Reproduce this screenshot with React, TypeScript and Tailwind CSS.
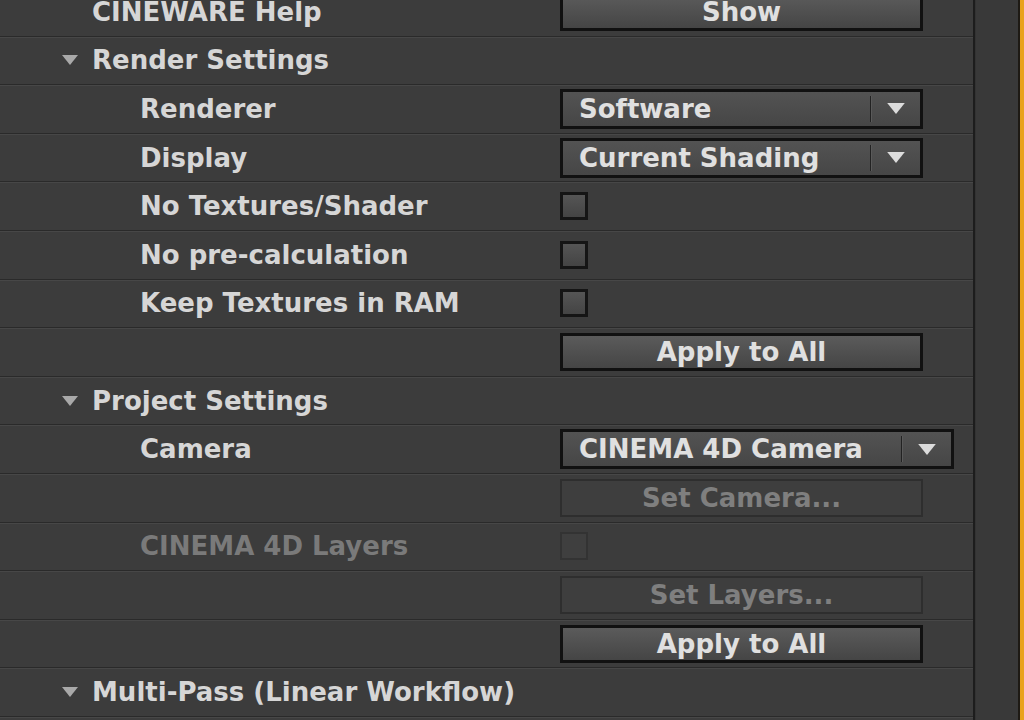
import React from 'react';

const font = "font-['DejaVu_Sans',sans-serif]";

const Tri = ({ className = '' }: { className?: string }) => (
  <svg width="16" height="10" viewBox="0 0 16 10" className={className}>
    <path d="M0 0 H16 L8 10 Z" fill="currentColor" />
  </svg>
);

const Row = ({ children }: { children: React.ReactNode }) => (
  <div className="h-[48.6px] flex items-center border-b border-[#2a2a2a] shadow-[0_1px_0_#474747]">
    {children}
  </div>
);

const Label = ({ text, dim = false }: { text: string; dim?: boolean }) => (
  <div className={`w-[560px] shrink-0 pl-[140px] ${dim ? 'text-[#7a7a7a]' : 'text-[#d6d6d6]'}`}>{text}</div>
);

const Header = ({ text }: { text: string }) => (
  <div className="w-[560px] shrink-0 flex items-center text-[#d6d6d6] whitespace-nowrap">
    <Tri className="ml-[62px] mr-[14px] text-[#a9a9a9]" />
    <span>{text}</span>
  </div>
);

const Button = ({ text, disabled = false }: { text: string; disabled?: boolean }) =>
  disabled ? (
    <div className="w-[363px] h-[38px] flex items-center justify-center border-2 border-[#2e2e2e] bg-[#3e3e3e] text-[#7f7f7f]">
      {text}
    </div>
  ) : (
    <div className="w-[363px] h-[38px] flex items-center justify-center border-[3px] border-[#111] bg-gradient-to-b from-[#5b5b5b] to-[#454545] text-[#e0e0e0]">
      {text}
    </div>
  );

const Select = ({ text, wide = false }: { text: string; wide?: boolean }) => (
  <div
    className={`${wide ? 'w-[394px]' : 'w-[363px]'} h-[40px] flex items-center border-[3px] border-[#111] bg-gradient-to-b from-[#535353] to-[#464646] text-[#e0e0e0]`}
  >
    <span className="flex-1 pl-[16px]">{text}</span>
    <div className="w-[2px] h-[26px] bg-[#222] border-r border-[#5a5a5a]" />
    <div className="w-[48px] flex justify-center">
      <Tri className="text-[#dcdcdc] w-[18px] h-[11px]" />
    </div>
  </div>
);

const Check = ({ disabled = false }: { disabled?: boolean }) => (
  <div
    className={`w-[28px] h-[28px] ${
      disabled ? 'border-2 border-[#333] bg-[#3f3f3f]' : 'border-[3px] border-[#151515] bg-gradient-to-b from-[#555] to-[#444]'
    }`}
  />
);

const Empty = () => <div className="w-[560px] shrink-0" />;

export default function App() {
  return (
    <div className={`w-[1024px] h-[720px] overflow-hidden bg-[#3c3c3c] flex ${font} font-bold text-[26px] leading-none`}>
      <div className="w-[975px] shrink-0 border-r-2 border-[#1d1d1d]">
        <div className="-mt-[12px]">
          <Row>
            <div className="w-[560px] shrink-0 pl-[92px] text-[#d6d6d6]">CINEWARE Help</div>
            <Button text="Show" />
          </Row>
          <Row>
            <Header text="Render Settings" />
          </Row>
          <Row>
            <Label text="Renderer" />
            <Select text="Software" />
          </Row>
          <Row>
            <Label text="Display" />
            <Select text="Current Shading" />
          </Row>
          <Row>
            <Label text="No Textures/Shader" />
            <Check />
          </Row>
          <Row>
            <Label text="No pre-calculation" />
            <Check />
          </Row>
          <Row>
            <Label text="Keep Textures in RAM" />
            <Check />
          </Row>
          <Row>
            <Empty />
            <Button text="Apply to All" />
          </Row>
          <Row>
            <Header text="Project Settings" />
          </Row>
          <Row>
            <Label text="Camera" />
            <Select text="CINEMA 4D Camera" wide />
          </Row>
          <Row>
            <Empty />
            <Button text="Set Camera..." disabled />
          </Row>
          <Row>
            <Label text="CINEMA 4D Layers" dim />
            <Check disabled />
          </Row>
          <Row>
            <Empty />
            <Button text="Set Layers..." disabled />
          </Row>
          <Row>
            <Empty />
            <Button text="Apply to All" />
          </Row>
          <Row>
            <Header text="Multi-Pass (Linear Workflow)" />
          </Row>
        </div>
      </div>
      <div className="flex-1 bg-[#393939] border-l border-[#333]" />
      <div className="w-[2px] bg-[#1e1a14]" />
      <div className="w-[4px] bg-[#e9a21c]" />
    </div>
  );
}
